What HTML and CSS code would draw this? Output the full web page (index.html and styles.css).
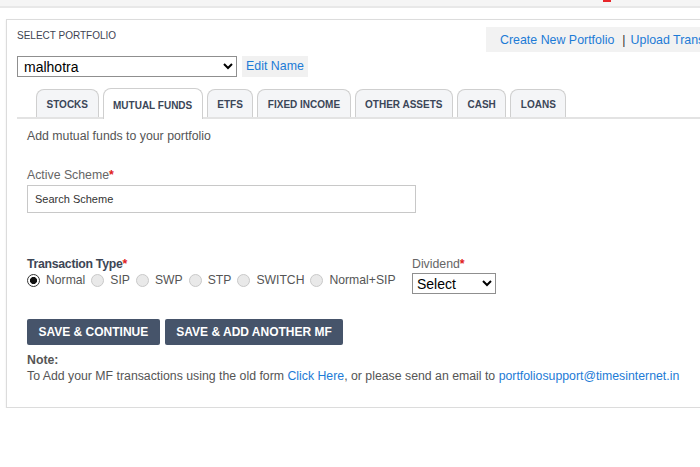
FILE: index.html
```html
<!DOCTYPE html>
<html>
<head>
<meta charset="utf-8">
<link rel="stylesheet" href="styles.css">
</head>
<body>
<div class="topbar"><span class="topbar-mark"></span></div>
<div class="card">
  <div class="card-head">
    <div class="portfolio">
      <div class="label-small">SELECT PORTFOLIO</div>
      <div class="select-row">
        <select class="portfolio-select"><option>malhotra</option></select>
        <a class="edit-name">Edit Name</a>
      </div>
    </div>
    <div class="links">
      <a class="link">Create New Portfolio</a><span class="sep">|</span><a class="link">Upload Trans</a>
    </div>
  </div>
  <div class="tabs">
    <div class="tab">STOCKS</div>
    <div class="tab active">MUTUAL FUNDS</div>
    <div class="tab">ETFS</div>
    <div class="tab">FIXED INCOME</div>
    <div class="tab">OTHER ASSETS</div>
    <div class="tab">CASH</div>
    <div class="tab">LOANS</div>
  </div>
  <div class="content">
    <p class="intro">Add mutual funds to your portfolio</p>
    <div class="field-label">Active Scheme<span class="req">*</span></div>
    <div class="scheme-input">Search Scheme</div>
    <div class="form-row">
      <div class="txn">
        <div class="field-label strong">Transaction Type<span class="req">*</span></div>
        <div class="radios">
          <label class="radio"><span class="dot checked"></span>Normal</label>
          <label class="radio"><span class="dot"></span>SIP</label>
          <label class="radio"><span class="dot"></span>SWP</label>
          <label class="radio"><span class="dot"></span>STP</label>
          <label class="radio"><span class="dot"></span>SWITCH</label>
          <label class="radio"><span class="dot"></span>Normal+SIP</label>
        </div>
      </div>
      <div class="dividend">
        <div class="field-label">Dividend<span class="req">*</span></div>
        <select class="dividend-select"><option>Select</option></select>
      </div>
    </div>
    <div class="buttons">
      <button class="btn">SAVE &amp; CONTINUE</button>
      <button class="btn">SAVE &amp; ADD ANOTHER MF</button>
    </div>
    <div class="note-title">Note:</div>
    <div class="note">To Add your MF transactions using the old form <a class="link">Click Here</a>, or please send an email to <a class="link">portfoliosupport@timesinternet.in</a></div>
  </div>
</div>
</body>
</html>
```

FILE: styles.css
```css
html, body {
  margin: 0;
  padding: 0;
  background: #ffffff;
  overflow: hidden;
  font-family: "Liberation Sans", Arial, sans-serif;
}
.topbar {
  height: 6px;
  background: #f5f5f5;
  border-bottom: 2px solid #e8e8e8;
  display: flex;
}
.topbar-mark {
  display: block;
  width: 8px;
  height: 2px;
  margin-left: 603px;
  background: #e8262a;
}
.card {
  margin: 11px 0 0 6px;
  width: 780px;
  height: 389px;
  border: 1px solid #dcdcdc;
  box-shadow: 0 1px 2px rgba(0,0,0,0.08);
  background: #fff;
  box-sizing: border-box;
}
.card-head {
  display: flex;
  padding-left: 10px;
}
.portfolio {
  width: 469px;
  padding-top: 10px;
}
.label-small {
  font-size: 10px;
  line-height: 12px;
  color: #3d4352;
}
.select-row {
  display: flex;
  align-items: center;
  margin-top: 14px;
}
.portfolio-select {
  width: 220px;
  height: 21px;
  font-family: "Liberation Sans", Arial, sans-serif;
  font-size: 14px;
  color: #000;
  border: 1px solid #8f8f8f;
  border-radius: 0;
  background: #fff;
  padding: 0 2px;
}
.edit-name {
  margin-left: 5px;
  background: #f1f1f1;
  padding: 3px 4px 4px 4px;
  font-size: 12.4px;
  line-height: 14px;
  color: #1d7bd6;
}
.links {
  margin-top: 7px;
  height: 25px;
  background: #f2f2f2;
  padding-left: 14px;
  padding-right: 40px;
  white-space: nowrap;
  display: flex;
  align-items: center;
  font-size: 12.4px;
}
.link {
  color: #1d7bd6;
}
.sep {
  margin: 0 5px 0 8px;
  color: #333;
}
.tabs {
  display: flex;
  align-items: flex-end;
  gap: 4px;
  margin: 10px 0 0 10px;
  padding-left: 19px;
  height: 30px;
  border-bottom: 2px solid #e3e3e3;
}
.tab {
  height: 28px;
  padding: 2px 9.5px 0 9.5px;
  box-sizing: border-box;
  display: flex;
  align-items: center;
  font-size: 10px;
  font-weight: bold;
  color: #3b4658;
  background: #f4f5f7;
  border: 1px solid #cfcfcf;
  border-bottom: none;
  border-radius: 8px 8px 0 0;
}
.tab.active {
  height: 31px;
  margin-bottom: -2px;
  background: #fff;
}
.content {
  padding: 0 0 0 20px;
}
.intro {
  margin: 10px 0 0 0;
  font-size: 12.3px;
  line-height: 14px;
  color: #555;
}
.field-label {
  font-size: 12.3px;
  line-height: 14px;
  color: #666;
}
.field-label.strong {
  color: #3d4656;
  font-weight: bold;
  letter-spacing: -0.3px;
}
.content > .field-label {
  margin-top: 25px;
}
.req {
  color: #e02020;
  font-weight: bold;
}
.scheme-input {
  margin-top: 3px;
  width: 389px;
  height: 28px;
  box-sizing: border-box;
  border: 1px solid #c8c8c8;
  padding-left: 7px;
  display: flex;
  align-items: center;
  font-size: 11px;
  color: #333;
}
.form-row {
  display: flex;
  margin-top: 44px;
}
.txn {
  width: 385px;
}
.radios {
  display: flex;
  align-items: center;
  margin-top: 2px;
  height: 14px;
}
.radio {
  display: flex;
  align-items: center;
  font-size: 12.2px;
  color: #555;
  margin-right: 6px;
}
.dot {
  width: 11px;
  height: 11px;
  border-radius: 50%;
  border: 1px solid #c9c9c9;
  background: #e9e9e9;
  margin-right: 6px;
  box-sizing: content-box;
}
.dot.checked {
  border-color: #333;
  background: radial-gradient(circle, #111 0 3.3px, #fff 3.8px);
}
.dividend-select {
  margin-top: 2px;
  width: 84px;
  height: 21px;
  font-family: "Liberation Sans", Arial, sans-serif;
  font-size: 14px;
  color: #000;
  border: 1px solid #8f8f8f;
  border-radius: 0;
  background: #fff;
}
.buttons {
  display: flex;
  gap: 5px;
  margin-top: 25px;
}
.btn {
  height: 26px;
  padding: 0 11.5px;
  border: none;
  border-radius: 2px;
  background: #46546a;
  color: #fff;
  font-family: "Liberation Sans", Arial, sans-serif;
  font-weight: bold;
  font-size: 12px;
}
.note-title {
  margin-top: 8px;
  font-size: 12.3px;
  line-height: 15px;
  font-weight: bold;
  color: #555;
}
.note {
  margin-top: 1px;
  font-size: 12.3px;
  line-height: 15px;
  color: #555;
}
```
